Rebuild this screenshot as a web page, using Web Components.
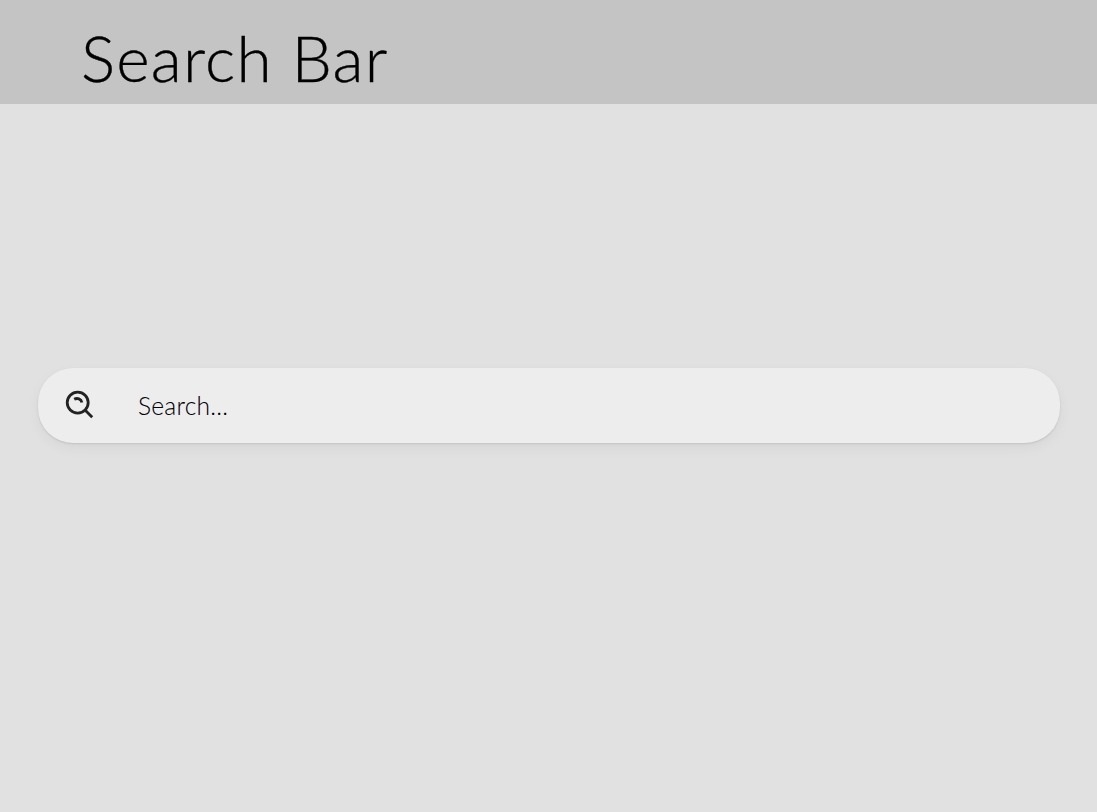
<!DOCTYPE html>
<html lang="en"><head><meta charset="utf-8"><title>Search Bar</title>
<style>body{margin:0;background:#e1e1e1;font-family:Lato,sans-serif;color:#000}</style></head>
<body><search-page><page-header slot="header">Search Bar</page-header><search-field>Search...</search-field></search-page>
<script>
const define=(name,html)=>customElements.define(name,class extends HTMLElement{constructor(){super();this.attachShadow({mode:'open'}).innerHTML=html}});
define('search-page',`<style>:host{display:flex;flex-direction:column;height:812px;overflow:hidden}main{padding:264px 37px 0 38px}</style><slot name="header"></slot><main><slot></slot></main>`);
define('page-header',`<style>:host{display:block;box-sizing:border-box;height:104px;padding:18px 0 0 81px;background:#c4c4c4}h1{margin:0;font-weight:300;font-size:64px;line-height:80px;letter-spacing:1.22px;white-space:nowrap;-webkit-text-stroke:.35px #000}</style><h1><slot></slot></h1>`);
define('search-icon',`<style>:host{display:block;width:32px;height:31px}svg{display:block;overflow:visible}</style><svg width="32" height="31" viewBox="0 0 32 31" fill="none" stroke="#222" stroke-width="2.8"><circle cx="14.7" cy="12.6" r="10.5"/><path d="M22 20L29.2 27.2"/><path stroke-width="2.8" d="M11.2 9.3C14.2 7.6 18.2 8.8 18.9 12.4"/></svg>`);
define('search-field',`<style>:host{display:flex;align-items:center;box-sizing:border-box;height:75px;padding-left:25px;border-radius:35px;background:#ededed;box-shadow:0 1px 2px #0000001c,0 5px 14px #0000000c}span{margin-left:43px;font-weight:300;font-size:24.6px;letter-spacing:.22px;line-height:32px;white-space:nowrap;-webkit-text-stroke:.05px #000}</style><search-icon></search-icon><span><slot></slot></span>`);
</script></body></html>
